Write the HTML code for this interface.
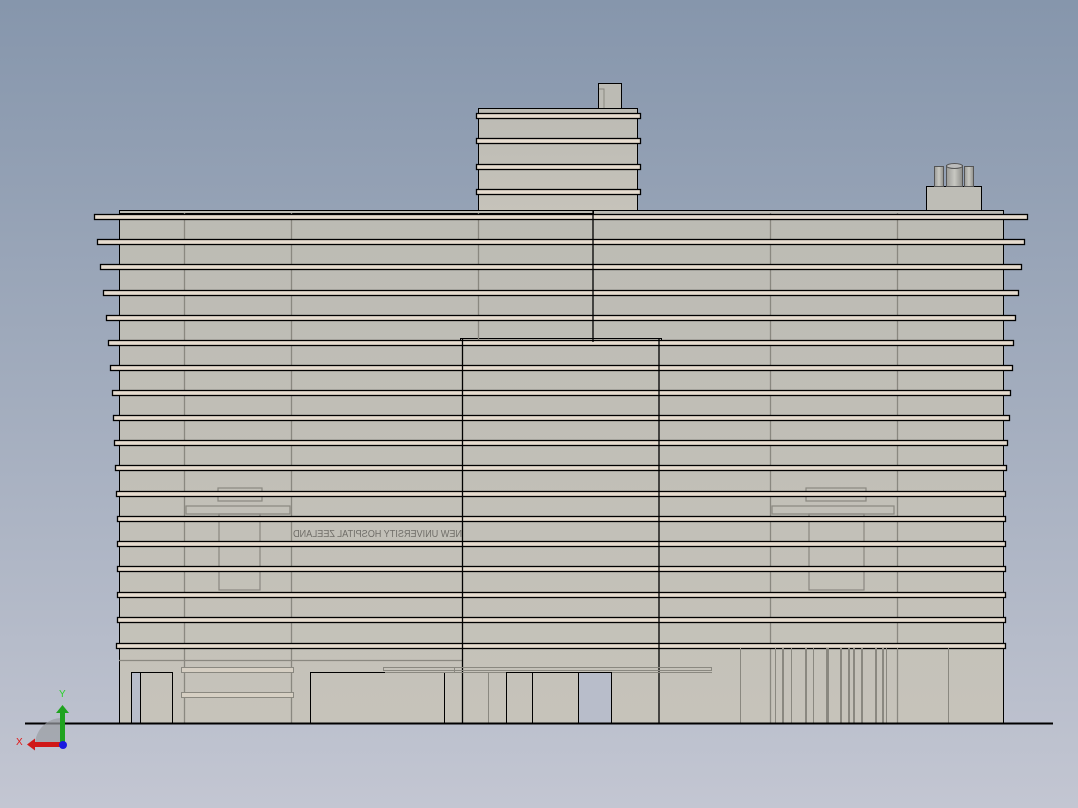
<!DOCTYPE html>
<html><head><meta charset="utf-8"><style>
html,body{margin:0;padding:0;width:1078px;height:808px;overflow:hidden}
svg{display:block}
</style></head><body>
<svg width="1078" height="808" viewBox="0 0 1078 808" xmlns="http://www.w3.org/2000/svg">
<defs>
<linearGradient id="bg" x1="0" y1="0" x2="0" y2="1">
<stop offset="0" stop-color="#8696ac"/>
<stop offset="0.5" stop-color="#a3adbe"/>
<stop offset="1" stop-color="#c3c6d2"/>
</linearGradient>
<linearGradient id="wall" x1="0" y1="0" x2="0" y2="1">
<stop offset="0" stop-color="#bcbbb4"/>
<stop offset="1" stop-color="#c6c3ba"/>
</linearGradient>
<linearGradient id="cyl" x1="0" y1="0" x2="1" y2="0">
<stop offset="0" stop-color="#9a9a96"/><stop offset="0.5" stop-color="#c8c8c2"/><stop offset="1" stop-color="#8e8e8a"/>
</linearGradient>
</defs>
<rect width="1078" height="808" fill="url(#bg)"/>

<rect x="598.5" y="83.5" width="23" height="25" fill="#bcbbb4" stroke="#000"/>
<path d="M599 89h5v19" fill="none" stroke="#8a8880"/>
<rect x="478.5" y="108.5" width="159" height="103" fill="url(#wall)" stroke="#000"/>
<g fill="#e6dccf" stroke="#000" stroke-width="1.3">
<rect x="476.5" y="113.5" width="164" height="5"/>
<rect x="476.5" y="138.5" width="164" height="5"/>
<rect x="476.5" y="164.5" width="164" height="5"/>
<rect x="476.5" y="189.5" width="164" height="5"/>
</g>

<rect x="926.5" y="186.5" width="55" height="24" fill="#bebdb6" stroke="#000"/>
<rect x="934.5" y="166.5" width="9" height="20" fill="url(#cyl)" stroke="#555"/>
<rect x="946.5" y="165.5" width="16" height="21" fill="url(#cyl)" stroke="#555"/>
<rect x="964.5" y="166.5" width="9" height="20" fill="url(#cyl)" stroke="#555"/>
<ellipse cx="954.5" cy="166" rx="8" ry="2.5" fill="#bbb" stroke="#555"/>

<rect x="119.5" y="210.5" width="884" height="513" fill="url(#wall)" stroke="#000"/>
<rect x="119.5" y="210.5" width="474" height="3" fill="none" stroke="#000"/>
<rect x="460.5" y="338.5" width="201" height="4" fill="none" stroke="#000"/>
<g stroke="#8a8880" stroke-width="1.3">
<line x1="184.5" y1="213" x2="184.5" y2="723"/>
<line x1="291.5" y1="213" x2="291.5" y2="723"/>
<line x1="478.5" y1="213" x2="478.5" y2="340"/>
<line x1="770.5" y1="213" x2="770.5" y2="723"/>
<line x1="897.5" y1="213" x2="897.5" y2="723"/>
<line x1="119" y1="660.5" x2="462" y2="660.5"/>
</g>

<g fill="none" stroke="#8a8880" stroke-width="1.2">
<rect x="218" y="488" width="44" height="13"/>
<rect x="186" y="506" width="104" height="8"/>
<rect x="219" y="514" width="41" height="76"/>
<rect x="806" y="488" width="60" height="13"/>
<rect x="772" y="506" width="122" height="8"/>
<rect x="809" y="514" width="55" height="76"/>
</g>
<text x="-462" y="537" transform="scale(-1,1)" font-family="Liberation Sans, sans-serif" font-size="10" textLength="169" lengthAdjust="spacingAndGlyphs" fill="#6f6d68">NEW UNIVERSITY HOSPITAL ZEELAND</text>

<g fill="#e6dccf" stroke="#000" stroke-width="1.3">
<rect x="94.5" y="214.5" width="933" height="5"/>
<rect x="97.5" y="239.5" width="927" height="5"/>
<rect x="100.5" y="264.5" width="921" height="5"/>
<rect x="103.5" y="290.5" width="915" height="5"/>
<rect x="106.5" y="315.5" width="909" height="5"/>
<rect x="108.5" y="340.5" width="905" height="5"/>
<rect x="110.5" y="365.5" width="902" height="5"/>
<rect x="112.5" y="390.5" width="898" height="5"/>
<rect x="113.5" y="415.5" width="896" height="5"/>
<rect x="114.5" y="440.5" width="893" height="5"/>
<rect x="115.5" y="465.5" width="891" height="5"/>
<rect x="116.5" y="491.5" width="889" height="5"/>
<rect x="117.5" y="516.5" width="888" height="5"/>
<rect x="117.5" y="541.5" width="888" height="5"/>
<rect x="117.5" y="566.5" width="888" height="5"/>
<rect x="117.5" y="592.5" width="888" height="5"/>
<rect x="117.5" y="617.5" width="888" height="5"/>
<rect x="116.5" y="643.5" width="889" height="5"/>
</g>
<g stroke="#000" stroke-width="1.3">
<line x1="462.5" y1="338" x2="462.5" y2="723"/>
<line x1="659" y1="338" x2="659" y2="723"/>
<line x1="593" y1="210" x2="593" y2="342"/>
</g>

<rect x="131.5" y="672.5" width="9" height="51" fill="#b8bdca"/>
<rect x="131.5" y="672.5" width="41" height="51" fill="none" stroke="#000"/>
<line x1="140.5" y1="672" x2="140.5" y2="723" stroke="#000"/>
<g fill="#d6cfc3" stroke="#8a8880">
<rect x="181.5" y="667.5" width="112" height="5"/>
<rect x="181.5" y="692.5" width="112" height="5"/>
</g>
<rect x="310.5" y="672.5" width="134" height="51" fill="none" stroke="#000"/>
<g fill="none" stroke="#8a8880">
<rect x="383.5" y="667.5" width="328" height="3"/>
<line x1="385" y1="672.5" x2="712" y2="672.5"/>
<line x1="488.5" y1="672" x2="488.5" y2="723"/>
<line x1="454.5" y1="667" x2="454.5" y2="672"/>
</g>
<rect x="578.5" y="672.5" width="33" height="51" fill="#b8bdca"/>
<rect x="506.5" y="672.5" width="105" height="51" fill="none" stroke="#000"/>
<line x1="532.5" y1="672" x2="532.5" y2="723" stroke="#000"/>
<line x1="578.5" y1="672" x2="578.5" y2="723" stroke="#000"/>
<g stroke="#8a8880">
<line x1="740.5" y1="648" x2="740.5" y2="723"/>
<line x1="948.5" y1="648" x2="948.5" y2="723"/>
<line x1="775.5" y1="648" x2="775.5" y2="723"/>
<line x1="791.5" y1="648" x2="791.5" y2="723"/>
<line x1="813.5" y1="648" x2="813.5" y2="723"/>
<line x1="828.5" y1="648" x2="828.5" y2="723"/>
<line x1="886.5" y1="648" x2="886.5" y2="723"/>
<line x1="897.5" y1="648" x2="897.5" y2="723"/>
</g>
<g stroke="#8a8880" stroke-width="2">
<line x1="783" y1="648" x2="783" y2="723"/>
<line x1="806" y1="648" x2="806" y2="723"/>
<line x1="827" y1="648" x2="827" y2="723"/>
<line x1="841" y1="648" x2="841" y2="723"/>
<line x1="849" y1="648" x2="849" y2="723"/>
<line x1="854" y1="648" x2="854" y2="723"/>
<line x1="862" y1="648" x2="862" y2="723"/>
<line x1="876" y1="648" x2="876" y2="723"/>
<line x1="883" y1="648" x2="883" y2="723"/>
</g>

<line x1="25" y1="723.5" x2="1053" y2="723.5" stroke="#000" stroke-width="2"/>

<path d="M62 745 L35 745 A27 27 0 0 1 62 718 Z" fill="#9a9ca2" opacity="0.7"/>
<rect x="60" y="712" width="5" height="33" fill="#1fa31f"/>
<path d="M56 713 L62.5 705 L69 713 Z" fill="#1fa31f"/>
<rect x="34" y="742" width="28" height="5" fill="#d01818"/>
<path d="M35 738.5 L27 744.5 L35 750.5 Z" fill="#d01818"/>
<circle cx="63" cy="745" r="4" fill="#1a1ae0"/>
<text x="59" y="697" font-family="Liberation Sans, sans-serif" font-size="10" fill="#2ad22a">Y</text>
<text x="16" y="745" font-family="Liberation Sans, sans-serif" font-size="10" fill="#e01818">X</text>
</svg>
</body></html>
